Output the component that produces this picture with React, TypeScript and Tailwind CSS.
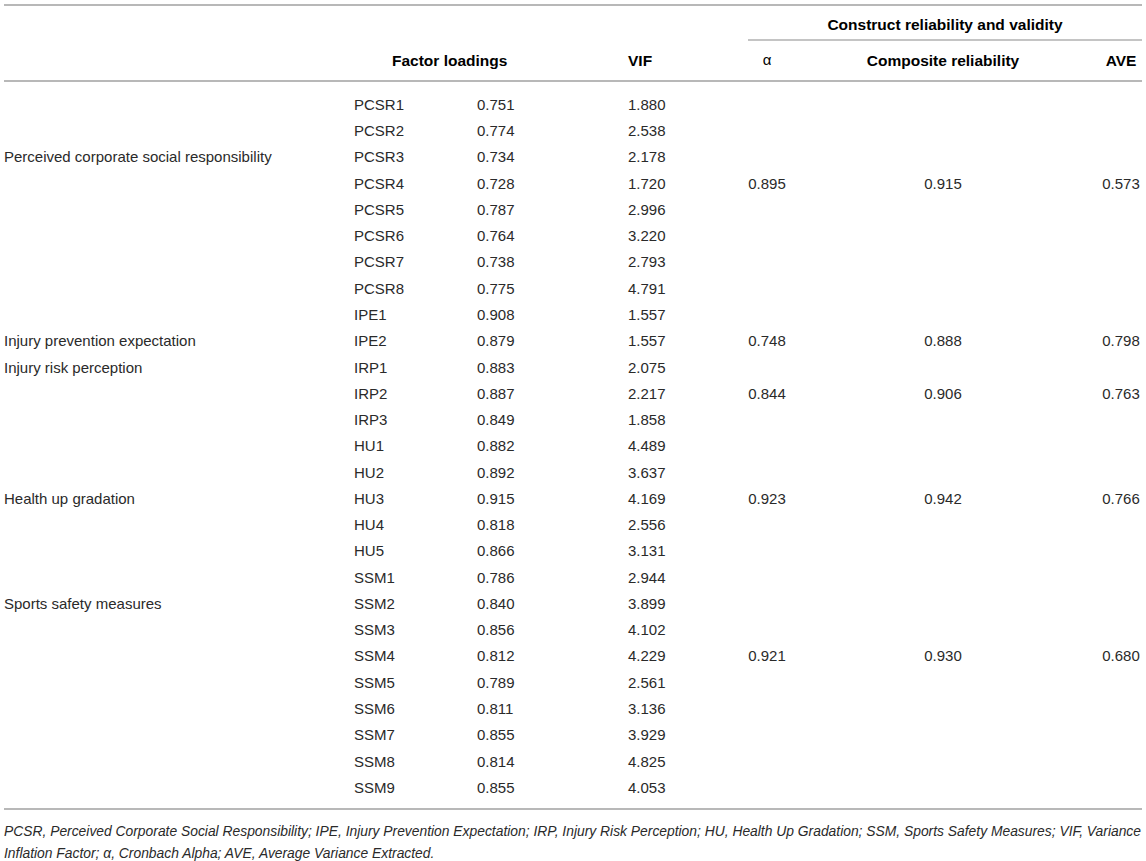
import React from 'react';

type Row = {
  item: string;
  loading: string;
  vif: string;
  label?: string;
  alpha?: string;
  cr?: string;
  ave?: string;
};

const rows: Row[] = [
  { item: 'PCSR1', loading: '0.751', vif: '1.880' },
  { item: 'PCSR2', loading: '0.774', vif: '2.538' },
  { item: 'PCSR3', loading: '0.734', vif: '2.178', label: 'Perceived corporate social responsibility' },
  { item: 'PCSR4', loading: '0.728', vif: '1.720', alpha: '0.895', cr: '0.915', ave: '0.573' },
  { item: 'PCSR5', loading: '0.787', vif: '2.996' },
  { item: 'PCSR6', loading: '0.764', vif: '3.220' },
  { item: 'PCSR7', loading: '0.738', vif: '2.793' },
  { item: 'PCSR8', loading: '0.775', vif: '4.791' },
  { item: 'IPE1', loading: '0.908', vif: '1.557' },
  { item: 'IPE2', loading: '0.879', vif: '1.557', label: 'Injury prevention expectation', alpha: '0.748', cr: '0.888', ave: '0.798' },
  { item: 'IRP1', loading: '0.883', vif: '2.075', label: 'Injury risk perception' },
  { item: 'IRP2', loading: '0.887', vif: '2.217', alpha: '0.844', cr: '0.906', ave: '0.763' },
  { item: 'IRP3', loading: '0.849', vif: '1.858' },
  { item: 'HU1', loading: '0.882', vif: '4.489' },
  { item: 'HU2', loading: '0.892', vif: '3.637' },
  { item: 'HU3', loading: '0.915', vif: '4.169', label: 'Health up gradation', alpha: '0.923', cr: '0.942', ave: '0.766' },
  { item: 'HU4', loading: '0.818', vif: '2.556' },
  { item: 'HU5', loading: '0.866', vif: '3.131' },
  { item: 'SSM1', loading: '0.786', vif: '2.944' },
  { item: 'SSM2', loading: '0.840', vif: '3.899', label: 'Sports safety measures' },
  { item: 'SSM3', loading: '0.856', vif: '4.102' },
  { item: 'SSM4', loading: '0.812', vif: '4.229', alpha: '0.921', cr: '0.930', ave: '0.680' },
  { item: 'SSM5', loading: '0.789', vif: '2.561' },
  { item: 'SSM6', loading: '0.811', vif: '3.136' },
  { item: 'SSM7', loading: '0.855', vif: '3.929' },
  { item: 'SSM8', loading: '0.814', vif: '4.825' },
  { item: 'SSM9', loading: '0.855', vif: '4.053' },
];

const cols = 'grid grid-cols-[350px_123px_151px_120px_38px_314px_42px]';

export default function App() {
  return (
    <div className="w-[1146px] h-[861px] bg-white px-[4px] pt-[4px] text-[15px] text-[#2a2a2a] font-['Liberation_Sans',Arial,sans-serif]">
      <div className="h-[2px] bg-[#b8b8b8]" />

      {/* header */}
      <div className={cols}>
        <div className="col-span-4" />
        <div className="col-span-3 h-[35px] pt-[5px] flex items-center justify-center border-b-2 border-[#c4c4c4] font-bold text-[15.5px] text-black">
          Construct reliability and validity
        </div>
      </div>
      <div className={`${cols} h-[39px] items-center font-bold text-[15.5px] text-black`}>
        <div />
        <div className="col-span-2 pl-[38px]">Factor loadings</div>
        <div>VIF</div>
        <div className="text-center font-normal text-[15px]">α</div>
        <div className="text-center">Composite reliability</div>
        <div className="text-center">AVE</div>
      </div>
      <div className="h-[2px] bg-[#b8b8b8]" />

      {/* body */}
      <div className="pt-[10px] pb-[7px]">
        {rows.map((r) => (
          <div key={r.item} className={`${cols} h-[26.27px] items-center`}>
            <div className="whitespace-nowrap">{r.label ?? ''}</div>
            <div>{r.item}</div>
            <div>{r.loading}</div>
            <div>{r.vif}</div>
            <div className="text-center">{r.alpha ?? ''}</div>
            <div className="text-center">{r.cr ?? ''}</div>
            <div className="text-center">{r.ave ?? ''}</div>
          </div>
        ))}
      </div>
      <div className="h-[2px] bg-[#b8b8b8]" />

      {/* footnote */}
      <div className="pt-[10px] italic text-[13.85px] leading-[22px] text-[#2a2a2a]">
        <div className="whitespace-nowrap">
          PCSR, Perceived Corporate Social Responsibility; IPE, Injury Prevention Expectation; IRP, Injury Risk Perception; HU, Health Up Gradation; SSM, Sports Safety Measures; VIF, Variance
        </div>
        <div className="whitespace-nowrap">Inflation Factor; α, Cronbach Alpha; AVE, Average Variance Extracted.</div>
      </div>
    </div>
  );
}
